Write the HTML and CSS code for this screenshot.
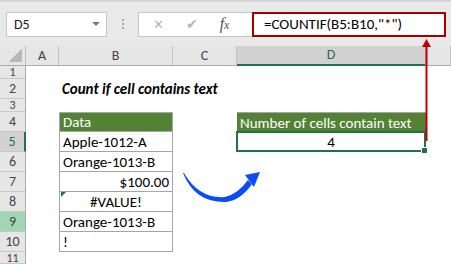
FILE: index.html
```html
<!DOCTYPE html>
<html lang="en">
<head>
  <meta charset="UTF-8" />
  <title>Count if cell contains text</title>
  <link rel="stylesheet" href="styles.css">
</head>
<body>
  <div class="topbar">
    <div class="namebox">
      <span>D5</span>
      <span class="caret"></span>
    </div>
    <div class="dots"><i></i><i></i><i></i></div>
    <div class="fxbox">
      <span class="ico cancel">&#10005;</span>
      <span class="ico enter">&#10004;</span>
      <span class="ico fx">f<small>x</small></span>
    </div>
    <div class="formula">=COUNTIF(B5:B10,"*")</div>
  </div>

  <div class="sheet">
    <!-- column headers -->
    <div class="hd corner"><span class="tri"></span></div>
    <div class="hd col">A</div>
    <div class="hd col">B</div>
    <div class="hd col">C</div>
    <div class="hd col active">D</div>
    <div class="hd col"></div>

    <!-- row 1 -->
    <div class="hd row small">1</div>
    <div class="c"></div><div class="c"></div><div class="c"></div><div class="c"></div><div class="c"></div>

    <!-- row 2 -->
    <div class="hd row">2</div>
    <div class="c"></div>
    <div class="c title">Count if cell contains text</div>
    <div class="c"></div><div class="c"></div><div class="c"></div>

    <!-- row 3 -->
    <div class="hd row small">3</div>
    <div class="c"></div><div class="c"></div><div class="c"></div><div class="c"></div><div class="c"></div>

    <!-- row 4 -->
    <div class="hd row">4</div>
    <div class="c"></div>
    <div class="c tb green first">Data</div>
    <div class="c"></div>
    <div class="c green dhead">Number of cells contain text</div>
    <div class="c"></div>

    <!-- row 5 -->
    <div class="hd row active">5</div>
    <div class="c"></div>
    <div class="c tb">Apple-1012-A</div>
    <div class="c"></div>
    <div class="c result">4<span class="handle"></span></div>
    <div class="c"></div>

    <!-- row 6 -->
    <div class="hd row">6</div>
    <div class="c"></div>
    <div class="c tb">Orange-1013-B</div>
    <div class="c"></div><div class="c"></div><div class="c"></div>

    <!-- row 7 -->
    <div class="hd row">7</div>
    <div class="c"></div>
    <div class="c tb right">$100.00</div>
    <div class="c"></div><div class="c"></div><div class="c"></div>

    <!-- row 8 -->
    <div class="hd row">8</div>
    <div class="c"></div>
    <div class="c tb center err">#VALUE!</div>
    <div class="c"></div><div class="c"></div><div class="c"></div>

    <!-- row 9 -->
    <div class="hd row marked">9</div>
    <div class="c"></div>
    <div class="c tb">Orange-1013-B</div>
    <div class="c"></div><div class="c"></div><div class="c"></div>

    <!-- row 10 -->
    <div class="hd row">10</div>
    <div class="c"></div>
    <div class="c tb">!</div>
    <div class="c"></div><div class="c"></div><div class="c"></div>

    <!-- row 11 -->
    <div class="hd row small">11</div>
    <div class="c"></div><div class="c"></div><div class="c"></div><div class="c"></div><div class="c"></div>
  </div>

  <!-- arrows drawn over the sheet -->
  <svg class="overlay" width="451" height="264" viewBox="0 0 451 264">
    <line x1="426.5" y1="45" x2="426.5" y2="141" stroke="#c00000" stroke-width="2"/>
    <polygon points="426.5,39 422,47 431,47" fill="#c00000"/>
    <path d="M183,173 Q195,203 226,202 Q241,200 252,184 L248,180 Q238,194 225,197 Q199,199 184,173 Z" fill="#0a4cf5"/>
    <polygon points="260,172 245,175 254,187" fill="#0a4cf5"/>
  </svg>
</body>
</html>
```

FILE: styles.css
```css
body {
  margin: 0;
  width: 451px;
  height: 264px;
  overflow: hidden;
  background: #fff;
  font-family: Carlito, Lato, "Liberation Sans", sans-serif;
  color: #000;
}

/* formula bar */
.topbar {
  display: flex;
  align-items: center;
  height: 44px;
  border-top: 2px solid #d4d4d4;
  background: #e9e9e9;
  padding-left: 6px;
}

.namebox {
  display: flex;
  align-items: center;
  justify-content: space-between;
  box-sizing: border-box;
  width: 101px;
  height: 25px;
  padding: 0 6px 0 7px;
  background: #fff;
  border: 1px solid #c6c6c6;
  font-size: 14px;
  color: #222;
}

.caret {
  width: 0;
  height: 0;
  border-left: 4px solid transparent;
  border-right: 4px solid transparent;
  border-top: 4px solid #777;
}

.dots {
  display: flex;
  flex-direction: column;
  gap: 2px;
  width: 31px;
  align-items: center;
}

.dots i {
  width: 2px;
  height: 2px;
  background: #a8a8a8;
}

.fxbox {
  display: flex;
  align-items: center;
  box-sizing: border-box;
  width: 114px;
  height: 25px;
  background: #fff;
  border: 1px solid #c6c6c6;
  border-right: none;
}

.ico {
  color: #b3b3b3;
  font-family: "DejaVu Sans", sans-serif;
}

.cancel {
  font-size: 13px;
  margin-left: 14px;
}

.enter {
  font-size: 14px;
  margin-left: 22px;
}

.fx {
  margin-left: 22px;
  font-family: "Liberation Serif", serif;
  font-style: italic;
  font-size: 16px;
  color: #555;
}

.fx small {
  font-size: 12px;
}

.formula {
  box-sizing: border-box;
  width: 194px;
  height: 25px;
  padding-left: 10px;
  background: #fff;
  border: 2px solid #a50000;
  font-size: 15px;
  line-height: 21px;
}

/* worksheet */
.sheet {
  display: grid;
  grid-template-columns: 26px 33px 114px 64px 189px 25px;
  grid-template-rows: 20px 13px 20px 13px repeat(7, 20px) 12px;
}

.hd {
  box-sizing: border-box;
  background: #e6e6e6;
  color: #444;
  font-size: 14px;
  line-height: 1;
  display: flex;
  align-items: center;
  justify-content: center;
  overflow: hidden;
}

.corner {
  justify-content: flex-end;
  align-items: flex-end;
  padding: 0 3px 3px 0;
  border-right: 1px solid #bdbdbd;
  border-bottom: 1px solid #ababab;
}

.tri {
  width: 13px;
  height: 14px;
  background: linear-gradient(to bottom right, transparent 50%, #b8b8b8 50%);
}

.col {
  border-right: 1px solid #c4c4c4;
  border-bottom: 1px solid #ababab;
}

.col.active {
  background: #d2d2d2;
  color: #217346;
  border-bottom: 2px solid #217346;
}

.row {
  border-right: 1px solid #ababab;
  border-bottom: 1px solid #c8c8c8;
}

.row.small {
  font-size: 12px;
}

.row.active {
  background: #d2d2d2;
  color: #217346;
  border-right: 2px solid #217346;
}

.row.marked {
  background: #a0d6b4;
}

.c {
  box-sizing: border-box;
  font-size: 15px;
  white-space: nowrap;
  padding: 0 3px;
  display: flex;
  align-items: center;
}

.title {
  font-weight: bold;
  font-style: italic;
  overflow: visible;
}

.tb {
  border-left: 1px solid #a6a6a6;
  border-right: 1px solid #a6a6a6;
  border-bottom: 1px solid #a6a6a6;
}

.tb.first {
  border-top: 1px solid #a6a6a6;
}

.green {
  background: #548235;
  color: #fff;
}

.dhead {
  border-top: 1px solid #a6a6a6;
}

.right {
  justify-content: flex-end;
}

.center {
  justify-content: center;
}

.err {
  position: relative;
}

.err::before {
  content: "";
  position: absolute;
  left: 1px;
  top: 0;
  border-top: 5px solid #217346;
  border-right: 5px solid transparent;
}

.result {
  position: relative;
  justify-content: center;
  border: 2px solid #217346;
  margin: -1px 0 0 -1px;
}

.handle {
  position: absolute;
  right: -4px;
  bottom: -4px;
  width: 5px;
  height: 5px;
  background: #217346;
  border: 1px solid #fff;
}

.overlay {
  position: absolute;
  left: 0;
  top: 0;
  pointer-events: none;
}
```
